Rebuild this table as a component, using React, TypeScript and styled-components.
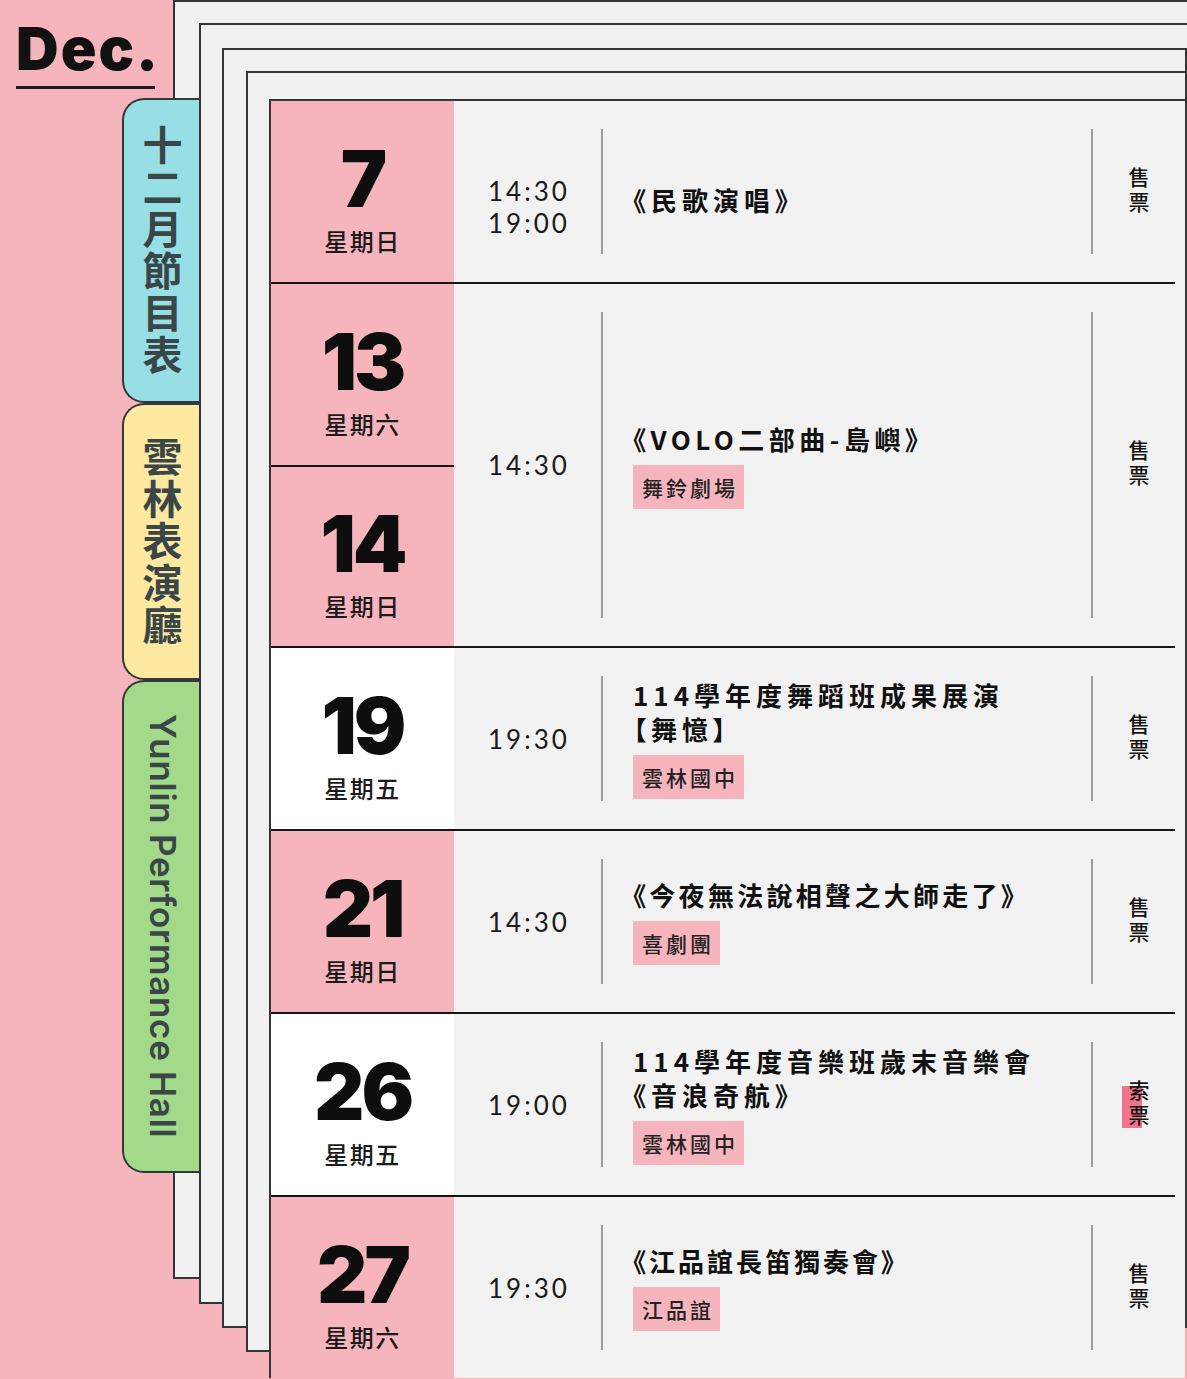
import React, { FC } from 'react'
import styled, { createGlobalStyle } from 'styled-components'

const PINK = '#f6b5bd'
const PAPER = '#f1f1f1'
const EDGE = '#353535'

const GlobalStyle = createGlobalStyle`
  html {
    overflow: hidden;
  }
  html, body {
    margin: 0;
    padding: 0;
    background: ${PINK};
  }
  body {
    font-family: "Noto Sans CJK TC", "Noto Sans", sans-serif;
    color: #141414;
  }
`

type Day = { d: string; w: string }
type Show = {
  days: Day[]
  white?: boolean
  times: string[]
  title: string[]
  spacing?: number
  tag?: string
  ticket: string
  mark?: boolean
  timePad?: number
  titlePad?: number
}

const shows: Show[] = [
  { days: [{ d: '7', w: '星期日' }], times: ['14:30', '19:00'], title: ['《民歌演唱》'], ticket: '售票', timePad: 30, titlePad: 16 },
  {
    days: [
      { d: '13', w: '星期六' },
      { d: '14', w: '星期日' },
    ],
    times: ['14:30'],
    title: ['《VOLO二部曲-島嶼》'],
    spacing: 4.5,
    tag: '舞鈴劇場',
    ticket: '售票',
  },
  { days: [{ d: '19', w: '星期五' }], white: true, times: ['19:30'], title: ['114學年度舞蹈班成果展演', '【舞憶】'], tag: '雲林國中', ticket: '售票' },
  { days: [{ d: '21', w: '星期日' }], times: ['14:30'], title: ['《今夜無法說相聲之大師走了》'], spacing: 3.3, tag: '喜劇團', ticket: '售票' },
  { days: [{ d: '26', w: '星期五' }], white: true, times: ['19:00'], title: ['114學年度音樂班歲末音樂會', '《音浪奇航》'], tag: '雲林國中', ticket: '索票', mark: true },
  { days: [{ d: '27', w: '星期六' }], times: ['19:30'], title: ['《江品誼長笛獨奏會》'], spacing: 3, tag: '江品誼', ticket: '售票' },
]

const tabs = [
  { label: '十二月節目表', bg: '#97dfe4', h: 305, latin: false },
  { label: '雲林表演廳', bg: '#fde9a0', h: 277, latin: false },
  { label: 'Yunlin Performance Hall', bg: '#a3da89', h: 493, latin: true },
]

const App: FC = () => (
  <>
    <GlobalStyle />
    <Page>
      <Side>
        <Month>Dec.</Month>
        <MonthRule />
        <Tabs>
          {tabs.map((t) => (
            <Tab key={t.label} $bg={t.bg} $h={t.h}>
              <TabLabel $latin={t.latin}>{t.label}</TabLabel>
            </Tab>
          ))}
        </Tabs>
      </Side>
      <Sheets>
        {/* stacked paper edges, each sheet peeking out from under the next */}
        <Sheet $pad="21px 0 0 24px" $mr={-30}>
          <Sheet $pad="23px 26px 0 21px" $mb={-27}>
            <Sheet $pad="21px 0 0 22px" $mb={-26}>
              <Sheet $pad="26px 0 0 21px" $mb={-26} $noRight>
                <Card>
                  {shows.map((s, i) => (
                    <Row key={i} $last={i === shows.length - 1}>
                      <DateCol $white={s.white}>
                        {s.days.map((day) => (
                          <DayCell key={day.d}>
                            <DayNum>{day.d}</DayNum>
                            <DayName>{day.w}</DayName>
                          </DayCell>
                        ))}
                      </DateCol>
                      <TimeCell $pt={s.timePad ?? 0}>
                        {s.times.map((t) => (
                          <div key={t}>{t}</div>
                        ))}
                      </TimeCell>
                      <TitleCell $pt={s.titlePad ?? 0}>
                        {s.title.map((t) => (
                          <TitleLine key={t} $ls={s.spacing ?? 5}>
                            {t}
                          </TitleLine>
                        ))}
                        {s.tag && <Tag>{s.tag}</Tag>}
                      </TitleCell>
                      <TicketCell>
                        <Ticket $mark={s.mark}>{s.ticket}</Ticket>
                      </TicketCell>
                    </Row>
                  ))}
                </Card>
              </Sheet>
            </Sheet>
          </Sheet>
        </Sheet>
      </Sheets>
    </Page>
  </>
)

export default App

const Page = styled.div`
  display: flex;
  align-items: flex-start;
  width: 1187px;
  height: 1379px;
  overflow: hidden;
`

const Side = styled.div`
  position: relative;
  z-index: 2;
  flex: 0 0 199px;
  display: flex;
  flex-direction: column;
`

const Month = styled.div`
  font-family: Inter, "Liberation Sans", sans-serif;
  font-weight: 900;
  font-size: 59px;
  line-height: 59px;
  letter-spacing: 2px;
  padding: 19px 0 0 16px;
  color: #111;
`

const MonthRule = styled.div`
  width: 139px;
  height: 3px;
  margin: 8px 0 0 16px;
  background: #1c1c1c;
`

const Tabs = styled.div`
  display: flex;
  flex-direction: column;
  margin: 9px 0 0 122px;
  width: 77px;
`

const Tab = styled.div<{ $bg: string; $h: number }>`
  height: ${(p) => p.$h}px;
  box-sizing: border-box;
  background: ${(p) => p.$bg};
  border: 2px solid #2f3a3b;
  border-right: none;
  border-radius: 22px 0 0 22px;
  display: flex;
  align-items: center;
  justify-content: center;
`

const TabLabel = styled.div<{ $latin: boolean }>`
  writing-mode: vertical-rl;
  text-orientation: mixed;
  font-family: ${(p) => (p.$latin ? 'Inter, "Noto Sans", sans-serif' : '"Noto Sans CJK TC", sans-serif')};
  font-weight: ${(p) => (p.$latin ? 600 : 700)};
  font-size: ${(p) => (p.$latin ? '35px' : '40px')};
  letter-spacing: ${(p) => (p.$latin ? '0.7px' : '2px')};
  color: #3b4649;
  margin-left: 2px;
`

const Sheets = styled.div`
  flex: 1;
  min-width: 0;
  margin-left: -26px;
`

const Sheet = styled.div<{ $pad: string; $mb?: number; $mr?: number; $noRight?: boolean }>`
  background: ${PAPER};
  border: 2px solid ${EDGE};
  ${(p) => (p.$noRight ? 'border-right: none;' : '')}
  padding: ${(p) => p.$pad};
  margin-bottom: ${(p) => p.$mb ?? 0}px;
  margin-right: ${(p) => p.$mr ?? 0}px;
`

const Card = styled.div`
  background: #f2f2f2;
  border-top: 2px solid ${EDGE};
  border-left: 2px solid ${EDGE};
  padding-right: 10px;
  margin-bottom: -28px;
`

const Row = styled.div<{ $last: boolean }>`
  display: grid;
  grid-template-columns: 183px 147px 490px 1fr;
  border-bottom: ${(p) => (p.$last ? 'none' : '2px solid #151515')};
`

const DateCol = styled.div<{ $white?: boolean }>`
  background: ${(p) => (p.$white ? '#ffffff' : PINK)};
  display: flex;
  flex-direction: column;

  & > * + * {
    border-top: 2px solid #151515;
  }
`

const DayCell = styled.div`
  height: 181px;
  box-sizing: border-box;
  padding-top: 4px;
  display: flex;
  flex-direction: column;
  align-items: center;
  justify-content: center;
`

const DayNum = styled.div`
  font-family: Inter, "Liberation Sans", sans-serif;
  font-weight: 900;
  font-size: 78px;
  line-height: 94px;
  letter-spacing: -3px;
  color: #0e0e0e;
`

const DayName = styled.div`
  font-size: 24px;
  line-height: 30px;
  font-weight: 500;
  letter-spacing: 1.5px;
  color: #1a1a1a;
`

const TimeCell = styled.div<{ $pt: number }>`
  display: flex;
  flex-direction: column;
  justify-content: center;
  padding: ${(p) => p.$pt}px 0 0 34px;
  font-family: Lato, "Noto Sans", sans-serif;
  font-size: 26px;
  line-height: 32px;
  letter-spacing: 3px;
  color: #1a1a1a;
`

const TitleCell = styled.div<{ $pt: number }>`
  margin: 28px 0;
  border-left: 2px solid #9c9c9c;
  padding: ${(p) => p.$pt}px 0 0 30px;
  display: flex;
  flex-direction: column;
  justify-content: center;
`

const TitleLine = styled.div<{ $ls: number }>`
  font-size: 26px;
  line-height: 34px;
  font-weight: 700;
  letter-spacing: ${(p) => p.$ls}px;
  font-feature-settings: 'palt';
  color: #111;
  white-space: nowrap;
`

const Tag = styled.span`
  align-self: flex-start;
  margin-top: 9px;
  background: ${PINK};
  padding: 0 6px 0 9px;
  height: 44px;
  line-height: 44px;
  font-size: 21px;
  font-weight: 500;
  letter-spacing: 3px;
  color: #222;
`

const TicketCell = styled.div`
  margin: 28px 0;
  border-left: 2px solid #9c9c9c;
  padding-left: 9px;
  display: flex;
  align-items: center;
  justify-content: center;
`

const Ticket = styled.div<{ $mark?: boolean }>`
  position: relative;
  isolation: isolate;
  writing-mode: vertical-rl;
  font-size: 21px;
  line-height: 21px;
  letter-spacing: 4px;
  font-weight: 500;
  color: #151515;

  &::before {
    content: '';
    display: ${(p) => (p.$mark ? 'block' : 'none')};
    position: absolute;
    z-index: -1;
    left: -6px;
    top: 6px;
    width: 20px;
    bottom: 2px;
    background: #f07490;
  }
`
